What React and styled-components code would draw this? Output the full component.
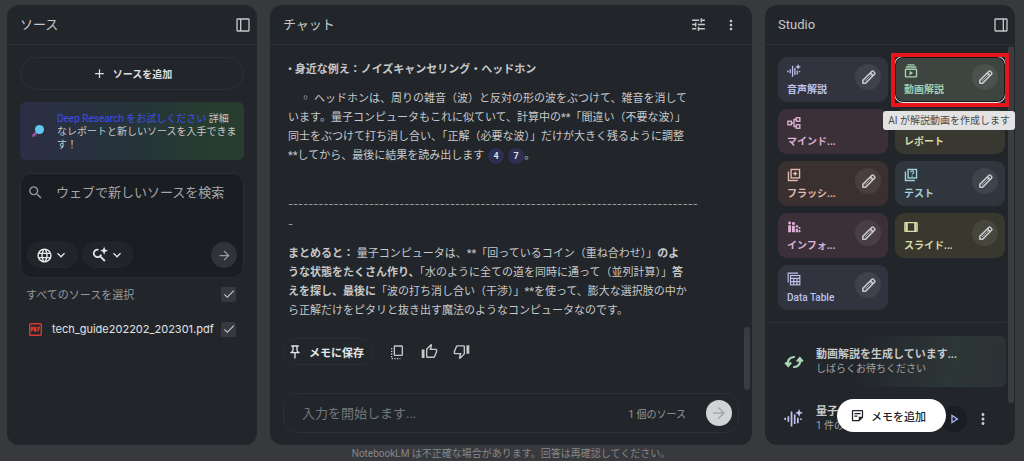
import React from 'react';
import styled, { createGlobalStyle } from 'styled-components';
import {
  MdAdd,
  MdArrowForward,
  MdCheck,
  MdKeyboardArrowDown,
  MdLanguage,
  MdMoreVert,
  MdOutlinePushPin,
  MdOutlineStickyNote2,
  MdOutlineThumbUp,
  MdOutlinePlayArrow,
  MdSearch,
  MdTune,
} from 'react-icons/md';

const GlobalStyle = createGlobalStyle`
  * {
    box-sizing: border-box;
  }
  body {
    margin: 0;
    background: #38393c;
    color: #c6c8ca;
    font-family: Roboto, 'Noto Sans CJK JP', sans-serif;
    font-size: 11px;
  }
  button, input, textarea {
    font: inherit;
    color: inherit;
    margin: 0;
    padding: 0;
    border: 0;
    background: none;
  }
  button {
    cursor: pointer;
  }
  svg {
    display: block;
    flex: none;
  }
`

const Page = styled.div`
  display: flex;
  flex-direction: column;
  height: 100vh;
  padding: 5px 9px 0 7px;
`

const Columns = styled.div`
  flex: 1;
  min-height: 0;
  display: grid;
  grid-template-columns: 250px minmax(0, 1fr) 250px;
  gap: 13px;
`

const Panel = styled.section`
  position: relative;
  display: flex;
  flex-direction: column;
  min-height: 0;
  background: #22262b;
  border-radius: 12px;
  overflow: hidden;
`

const PanelHeader = styled.header`
  flex: none;
  display: flex;
  align-items: center;
  gap: 17px;
  height: 40px;
  padding: 0 ${p => p.$right || '6px'} 0 13px;
  border-bottom: 1px solid #2d3136;
  h2 {
    flex: 1;
    margin: 0;
    font-size: 13px;
    line-height: 20px;
    font-weight: 400;
  }
`

const IconButton = styled.button`
  display: flex;
  align-items: center;
  justify-content: center;
  flex: none;
  width: ${p => p.$size || '16px'};
  height: ${p => p.$size || '16px'};
  border-radius: 50%;
  background: ${p => p.$bg || 'none'};
  color: ${p => p.$color || '#c6c8ca'};
`

const Footer = styled.footer`
  flex: none;
  height: 16px;
  font-size: 10px;
  line-height: 17px;
  text-align: center;
  color: #85878a;
`

/* sources */

const SourceBody = styled.div`
  display: flex;
  flex-direction: column;
  padding: 12px 13px 0;
`

const AddSource = styled.button`
  display: flex;
  align-items: center;
  justify-content: center;
  gap: 6px;
  height: 33px;
  border: 1px solid #2d3136;
  border-radius: 17px;
  color: #dcdee0;
  font-size: 10px;
  font-weight: 700;
`

const Banner = styled.div`
  display: flex;
  align-items: center;
  gap: 12px;
  height: 58px;
  margin-top: 12px;
  padding: 0 0 0 11px;
  border-radius: 6px;
  background: linear-gradient(90deg, #2b2e45, #26343a 50%, #263d30 85%);
  p {
    margin: 0;
    font-size: 10px;
    line-height: 13px;
    white-space: nowrap;
  }
  a {
    color: #3e4df0;
    text-decoration: none;
  }
`

const SearchBox = styled.div`
  display: flex;
  flex-direction: column;
  justify-content: space-between;
  height: 105px;
  margin-top: 13px;
  padding: 8px 6px 9px;
  border: 1px solid #2a2d32;
  border-radius: 12px;
  background: #1a1d22;
`

const SearchField = styled.label`
  display: flex;
  align-items: center;
  gap: 12px;
  color: #96989b;
  input {
    flex: 1;
    min-width: 0;
    height: 20px;
    outline: 0;
    font-size: 13px;
  }
  input::placeholder {
    color: #a4a7a9;
    opacity: 1;
  }
`

const SearchActions = styled.div`
  display: flex;
  align-items: center;
  gap: 4px;
  > :last-child {
    margin-left: auto;
  }
`

const Pill = styled.button`
  display: flex;
  align-items: center;
  justify-content: center;
  width: 51px;
  height: 26px;
  border: 1px solid #25282d;
  border-radius: 13px;
  background: #212429;
  color: #e4e6e8;
`

const SourceRow = styled.label`
  display: flex;
  align-items: center;
  height: ${p => p.$height};
  padding: 0 8px 0 ${p => p.$left};
  font-family: Inter, 'Noto Sans CJK JP', sans-serif;
  color: ${p => p.$color};
  span {
    flex: 1;
    margin-left: ${p => p.$gap || '0'};
  }
`

const CheckHolder = styled.span`
  && {
    flex: none;
    display: grid;
    place-items: center;
    width: 15px;
    height: 15px;
    margin: 0;
    border-radius: 2px;
    background: #36393d;
    color: #c6c8ca;
  }
  > * {
    grid-area: 1 / 1;
  }
  input {
    appearance: none;
    width: 15px;
    height: 15px;
  }
  svg {
    visibility: hidden;
    pointer-events: none;
  }
  input:checked + svg {
    visibility: visible;
  }
`

/* chat */

const ChatBody = styled.div`
  flex: 1;
  min-height: 0;
  display: flex;
  flex-direction: column;
  padding: 15px 13px 12px;
`

const Message = styled.div`
  flex: none;
  padding-left: 5px;
  line-height: 19px;
  white-space: nowrap;
  p {
    margin: 0;
  }
`

const Bullet = styled.p`
  && {
    margin-bottom: 10px;
  }
  font-weight: 700;
`

const SubPoint = styled.p`
  &&::before {
    content: '◦';
    display: inline-block;
    width: 14px;
    padding-left: 12px;
  }
`

const Dashes = styled.p`
  && {
    margin: 29px 0 10px;
    line-height: 20px;
  }
  font-family: Inter, sans-serif;
  color: #a0a2a4;
`

const Citation = styled.button`
  width: 16px;
  height: 16px;
  margin-left: 4px;
  border-radius: 8px;
  background: #2c2f52;
  color: #dcdee8;
  font-size: 9px;
  line-height: 16px;
  font-weight: 700;
  text-align: center;
`

const Reactions = styled.div`
  display: flex;
  align-items: center;
  gap: 16px;
  margin-top: 18px;
`

const SaveNote = styled.button`
  display: flex;
  align-items: center;
  gap: 6px;
  height: 27px;
  margin-right: -1px;
  padding: 0 9px 0 3px;
  border: 1px solid #2a2e33;
  border-radius: 14px;
  color: #e4e6e8;
  font-weight: 700;
`

const ThumbDown = styled(MdOutlineThumbUp)`
  transform: rotate(180deg);
`

const Composer = styled.label`
  display: flex;
  align-items: center;
  height: 40px;
  margin-top: auto;
  padding: 0 6px 0 18px;
  border: 1px solid #2d3136;
  border-radius: 14px;
  input {
    flex: 1;
    min-width: 0;
    outline: 0;
    font-size: 13px;
  }
  input::placeholder {
    color: #74777a;
    opacity: 1;
  }
  span {
    margin-right: 20px;
    font-size: 10px;
    color: #96989b;
  }
`

const ScrollThumb = styled.div`
  position: absolute;
  top: ${p => p.$top};
  bottom: ${p => p.$bottom};
  right: ${p => p.$right};
  width: 6px;
  border-radius: 3px;
  background: #393c41;
`

/* studio */

const TileGrid = styled.div`
  flex: none;
  display: grid;
  grid-template-columns: 1fr 1fr;
  gap: 7px;
  padding: 12px 10px 12px 13px;
`

const Tile = styled.div`
  position: relative;
  display: flex;
  align-items: flex-start;
  justify-content: space-between;
  height: 45px;
  padding: 7px 7px 0 9px;
  border-radius: 9px;
  background: ${p => p.$bg};
  color: ${p => p.$color};
`

const TileLabel = styled.button`
  display: flex;
  flex-direction: column;
  gap: 4px;
  color: inherit;
  text-align: left;
  font-size: 10px;
  line-height: 15px;
  font-weight: ${p => p.$latin ? 500 : 700};
  white-space: nowrap;
`

const Highlight = styled.div`
  position: absolute;
  inset: -1px;
  border: 1px solid #e6e6e6;
  border-radius: 9px;
  box-shadow: inset 0 0 0 1px #17191c;
  pointer-events: none;
  &::after {
    content: '';
    position: absolute;
    inset: -4px -4px -5px;
    border: 4px solid #e8141a;
  }
`

const Tooltip = styled.div`
  position: absolute;
  top: 54px;
  right: -10px;
  z-index: 1;
  width: max-content;
  padding: 0 5px;
  border-radius: 3px;
  background: #e3e3e3;
  color: #4a4c4e;
  font-size: 10px;
  line-height: 19px;
`

const Artifacts = styled.div`
  flex: none;
  margin-right: 9px;
  padding-top: 13px;
  border-top: 1px solid #2d3136;
`

const Artifact = styled.div`
  display: flex;
  align-items: center;
  gap: 12px;
  height: 51px;
  margin: 0 0 6px 13px;
  padding: 0 16px 0 5px;
  border-radius: 6px;
  background: ${p => p.$busy ? 'linear-gradient(100deg, #22262b 35%, #2d3637 75%, #2b3235)' : 'none'};
`

const ArtifactText = styled.div`
  flex: 1;
  min-width: 0;
  white-space: nowrap;
  strong {
    display: block;
    font-weight: 700;
    line-height: 15px;
  }
  small {
    display: block;
    font-size: 10px;
    line-height: 14px;
    color: #a0a2a5;
  }
`

const ArtifactActions = styled.div`
  display: flex;
  align-items: center;
  gap: 9px;
`

const AddNote = styled.button`
  position: absolute;
  left: 72px;
  bottom: 13px;
  display: flex;
  align-items: center;
  gap: 6px;
  height: 33px;
  padding: 0 20px 0 13px;
  border-radius: 17px;
  background: #fff;
  color: #202227;
  font-weight: 500;
`

/* icons that the icon set does not have */

function Glyph({ size = 14, weight = 2.4, children }) {
  return (
    <svg width={size} height={size} viewBox="0 0 24 24" fill="none" stroke="currentColor" strokeWidth={weight} aria-hidden="true">
      {children}
    </svg>
  )
}

const DockIcon = ({ side }) => (
  <Glyph size={16} weight={2}>
    <rect x="3" y="3" width="18" height="18" rx="1" />
    {side === 'left' ? <path d="M8.500 3v18" /> : <path d="M15.500 3v18" />}
  </Glyph>
)

const AudioIcon = ({ size }) => (
  <Glyph size={size}>
    <path d="M1.500 11v3M5.500 9v7M9.500 3v19M13.500 7v12M17.500 11v7M21.500 12v2" strokeWidth="2.200" />
    <path d="M19 0l1.400 3.600L24 5l-3.600 1.400L19 10l-1.400-3.600L14 5l3.600-1.400z" fill="currentColor" stroke="none" />
  </Glyph>
)

const VideoIcon = () => (
  <Glyph>
    <rect x="2.500" y="9" width="19" height="13" rx="1" />
    <path d="M3 5.200h18M6 1.500h12" />
    <path d="M9.500 11.500v8l6-4z" fill="currentColor" stroke="none" />
  </Glyph>
)

const MindmapIcon = () => (
  <Glyph>
    <rect x="1.500" y="9" width="6" height="6" />
    <rect x="16" y="3" width="6" height="6" />
    <rect x="16" y="15" width="6" height="6" />
    <path d="M8 12h4M16 6h-4v12h4" />
  </Glyph>
)

const CardsIcon = ({ quiz }) => (
  <Glyph>
    <path d="M2.500 6v15.500h16" />
    <rect x="7" y="2.500" width="14.500" height="14.500" />
    {quiz
      ? <path d="M11.500 7.500a2.500 2.500 0 1 1 3.500 2.200c-.8.400-1 .8-1 1.600M14 13v2" strokeWidth="2" />
      : <path d="M14 5l1.500 3.300 3.300 1.500-3.300 1.500L14 14.600l-1.500-3.300-3.300-1.500 3.300-1.500z" fill="currentColor" stroke="none" />}
  </Glyph>
)

const InfographicIcon = () => (
  <Glyph>
    <g fill="currentColor" stroke="none">
      <circle cx="4.500" cy="5" r="2.500" />
      <path d="M2 9h5v12H2zM8.500 4h5v4h-5zM8.500 10h5v11h-5zM15 9h4v4h-4zM15 15h4v6h-4zM20 12h3v3h-3zM20 17h3v4h-3z" />
    </g>
  </Glyph>
)

const SlidesIcon = () => (
  <Glyph>
    <rect x="1.500" y="4.500" width="21" height="15" rx="1" />
    <path d="M4.500 4v16M19.500 4v16" strokeWidth="4" />
  </Glyph>
)

const TableIcon = () => (
  <Glyph weight={2}>
    <path d="M2 18V2h17" />
    <rect x="6" y="6" width="16" height="16" />
    <path d="M6 11h16M6 16.500h16M11.500 11v11M17 11v11" />
  </Glyph>
)

const ReportIcon = () => (
  <Glyph>
    <path d="M4 3h16v18H4zM8 8h8M8 12h8M8 16h5" />
  </Glyph>
)

const PencilIcon = () => (
  <Glyph size={17} weight={2.2}>
    <path d="M4 20v-4L16.500 3.500c.8-.8 1.800-.8 2.600 0l1.400 1.400c.8.800.8 1.800 0 2.600L8 20z" strokeLinejoin="round" />
    <path d="M14.500 5.500l4 4" strokeWidth="2.600" />
    <path d="M7 17L16 8" strokeWidth="1" />
  </Glyph>
)

const ResearchIcon = () => (
  <Glyph size={18}>
    <path d="M10 5A5 5 0 1 0 13.500 11.500M12 13.500L18.500 20" strokeWidth="2.400" />
    <path d="M17.500 1l1.500 3.800L22.800 6.300 19 7.800l-1.500 3.800L16 7.800l-3.800-1.500L16 4.800z" fill="currentColor" stroke="none" />
  </Glyph>
)

const LensIcon = () => (
  <svg width="14" height="14" viewBox="0 0 14 14" aria-hidden="true">
    <path d="M2.500 11.500l3-3" stroke="#9a4b9c" strokeWidth="3" strokeLinecap="round" />
    <circle cx="8.500" cy="5.500" r="4.500" fill="#5fc9ee" />
  </svg>
)

const PdfIcon = () => (
  <svg width="13" height="13" viewBox="0 0 13 13" fill="none" stroke="#d93a30" aria-hidden="true">
    <rect x="0.700" y="0.700" width="11.600" height="11.600" rx="1" strokeWidth="1.400" />
    <path d="M2.500 8.500v-4h1.200v2H2.500M5.500 4.500v3.500h1.300v-3.500zM9 8.500v-4h2M9 6.500h1.500" strokeWidth="1.300" />
  </svg>
)

const CopyIcon = () => (
  <Glyph size={16} weight={2}>
    <rect x="8" y="3" width="12" height="14" rx="1" />
    <path d="M4 6v16h13" strokeDasharray="2 2" />
  </Glyph>
)

const SyncIcon = () => (
  <Glyph size={20} weight={2.6}>
    <path d="M1.500 12.500l3.500 4 3.500-4M5 16c-1.500-6 2-10.500 8-10M22.500 11.500l-3.500-4-3.500 4M19 8c1.500 6-2 10.500-8 10" />
  </Glyph>
)

const tiles = [
  { label: '音声解説', icon: <AudioIcon size={14} />, bg: '#31343f', color: '#bcc3ee', editable: true },
  { label: '動画解説', icon: <VideoIcon />, bg: '#3e443f', color: '#a5d0b0', editable: true, active: true },
  { label: 'マインド...', icon: <MindmapIcon />, bg: '#3b3038', color: '#dcb0d2' },
  { label: 'レポート', icon: <ReportIcon />, bg: '#383830', color: '#d9d9a8' },
  { label: 'フラッシ...', icon: <CardsIcon />, bg: '#3a302f', color: '#e0b9ae', editable: true },
  { label: 'テスト', icon: <CardsIcon quiz />, bg: '#30363e', color: '#a3cfd6', editable: true },
  { label: 'インフォ...', icon: <InfographicIcon />, bg: '#3b3038', color: '#dcb0d8', editable: true },
  { label: 'スライド...', icon: <SlidesIcon />, bg: '#38382e', color: '#d9d9a8', editable: true },
  { label: 'Data Table', icon: <TableIcon />, bg: '#31343f', color: '#bcc3ee', editable: true, latin: true },
]

function Check({ label }) {
  return (
    <CheckHolder>
      <input type="checkbox" defaultChecked aria-label={label} />
      <MdCheck size={14} />
    </CheckHolder>
  )
}

function Sources() {
  return (
    <Panel>
      <PanelHeader>
        <h2>ソース</h2>
        <IconButton aria-label="ソースパネル"><DockIcon side="left" /></IconButton>
      </PanelHeader>
      <SourceBody>
        <AddSource><MdAdd size={15} />ソースを追加</AddSource>
        <Banner>
          <LensIcon />
          <p>
            <a href="#deep-research">Deep Research をお試しください</a> 詳細<br />
            なレポートと新しいソースを入手できま<br />
            す！
          </p>
        </Banner>
        <SearchBox>
          <SearchField>
            <MdSearch size={17} />
            <input type="text" placeholder="ウェブで新しいソースを検索" aria-label="ウェブで新しいソースを検索" />
          </SearchField>
          <SearchActions>
            <Pill aria-label="ウェブ"><MdLanguage size={17} /><MdKeyboardArrowDown size={16} /></Pill>
            <Pill aria-label="リサーチ"><ResearchIcon /><MdKeyboardArrowDown size={16} /></Pill>
            <IconButton $size="26px" $bg="#303338" $color="#96989b" aria-label="検索"><MdArrowForward size={15} /></IconButton>
          </SearchActions>
        </SearchBox>
        <SourceRow $height="32px" $left="6px" $color="#96999c">
          <span>すべてのソースを選択</span>
          <Check label="すべてのソースを選択" />
        </SourceRow>
        <SourceRow $height="38px" $left="9px" $color="#e2e4e6" $gap="10px">
          <PdfIcon />
          <span>tech_guide202202_202301.pdf</span>
          <Check label="tech_guide202202_202301.pdf" />
        </SourceRow>
      </SourceBody>
    </Panel>
  )
}

function Chat() {
  return (
    <Panel>
      <PanelHeader $right="13px">
        <h2>チャット</h2>
        <IconButton aria-label="チャットを設定"><MdTune size={17} /></IconButton>
        <IconButton aria-label="その他"><MdMoreVert size={16} /></IconButton>
      </PanelHeader>
      <ChatBody>
        <Message>
          <Bullet>• 身近な例え：ノイズキャンセリング・ヘッドホン</Bullet>
          <SubPoint>
            ヘッドホンは、周りの雑音（波）と反対の形の波をぶつけて、雑音を消して<br />
            います。量子コンピュータもこれに似ていて、計算中の**「間違い（不要な波）」<br />
            同士をぶつけて打ち消し合い、「正解（必要な波）」だけが大きく残るように調整<br />
            **してから、最後に結果を読み出します<Citation>4</Citation><Citation>7</Citation>。
          </SubPoint>
          <Dashes>
            {'-'.repeat(81)}<br />-
          </Dashes>
          <p>
            <b>まとめると：</b> 量子コンピュータは、**「回っているコイン（重ね合わせ）」<b>のよ</b><br />
            <b>うな状態をたくさん作り、</b>「水のように全ての道を同時に通って（並列計算）」<b>答</b><br />
            <b>えを探し、最後に</b>「波の打ち消し合い（干渉）」**を使って、膨大な選択肢の中か<br />
            ら正解だけをピタリと抜き出す魔法のようなコンピュータなのです。
          </p>
        </Message>
        <Reactions>
          <SaveNote><MdOutlinePushPin size={16} />メモに保存</SaveNote>
          <IconButton aria-label="コピー"><CopyIcon /></IconButton>
          <IconButton aria-label="高評価"><MdOutlineThumbUp size={17} /></IconButton>
          <IconButton aria-label="低評価"><ThumbDown size={17} /></IconButton>
        </Reactions>
        <Composer>
          <input type="text" placeholder="入力を開始します..." aria-label="入力を開始します" />
          <span>1 個のソース</span>
          <IconButton $size="26px" $bg="#d2d3d5" $color="#a6a8aa" aria-label="送信"><MdArrowForward size={18} /></IconButton>
        </Composer>
      </ChatBody>
      <ScrollThumb $top="322px" $bottom="55px" $right="2px" />
    </Panel>
  )
}

function Studio() {
  return (
    <Panel>
      <PanelHeader>
        <h2>Studio</h2>
        <IconButton aria-label="Studio パネル"><DockIcon side="right" /></IconButton>
      </PanelHeader>
      <ScrollThumb $top="41px" $bottom="42px" $right="1px" />
      <TileGrid>
        {tiles.map(t => (
          <Tile key={t.label} $bg={t.bg} $color={t.color}>
            <TileLabel $latin={t.latin}>{t.icon}{t.label}</TileLabel>
            {t.editable && (
              <IconButton $size="26px" $bg="rgba(255, 255, 255, 0.07)" aria-label={`${t.label}を編集`}>
                <PencilIcon />
              </IconButton>
            )}
            {t.active && <Highlight />}
            {t.active && <Tooltip role="tooltip">AI が解説動画を作成します</Tooltip>}
          </Tile>
        ))}
      </TileGrid>
      <Artifacts>
        <Artifact $busy>
          <IconButton as="span" $size="21px" $color="#a9d8b6"><SyncIcon /></IconButton>
          <ArtifactText>
            <strong>動画解説を生成しています...</strong>
            <small>しばらくお待ちください</small>
          </ArtifactText>
        </Artifact>
        <Artifact>
          <IconButton as="span" $size="21px" $color="#bcc3ee"><AudioIcon size={19} /></IconButton>
          <ArtifactText>
            <strong>量子</strong>
            <small>1 件の</small>
          </ArtifactText>
          <ArtifactActions>
            <IconButton $size="26px" $bg="#1b1d24" $color="#a9b0ee" aria-label="再生"><MdOutlinePlayArrow size={16} /></IconButton>
            <IconButton $size="14px" aria-label="その他"><MdMoreVert size={18} /></IconButton>
          </ArtifactActions>
        </Artifact>
      </Artifacts>
      <AddNote><MdOutlineStickyNote2 size={15} />メモを追加</AddNote>
    </Panel>
  )
}

export default function App() {
  return (
    <>
      <GlobalStyle />
      <Page>
        <Columns>
          <Sources />
          <Chat />
          <Studio />
        </Columns>
        <Footer>NotebookLM は不正確な場合があります。回答は再確認してください。</Footer>
      </Page>
    </>
  )
}
